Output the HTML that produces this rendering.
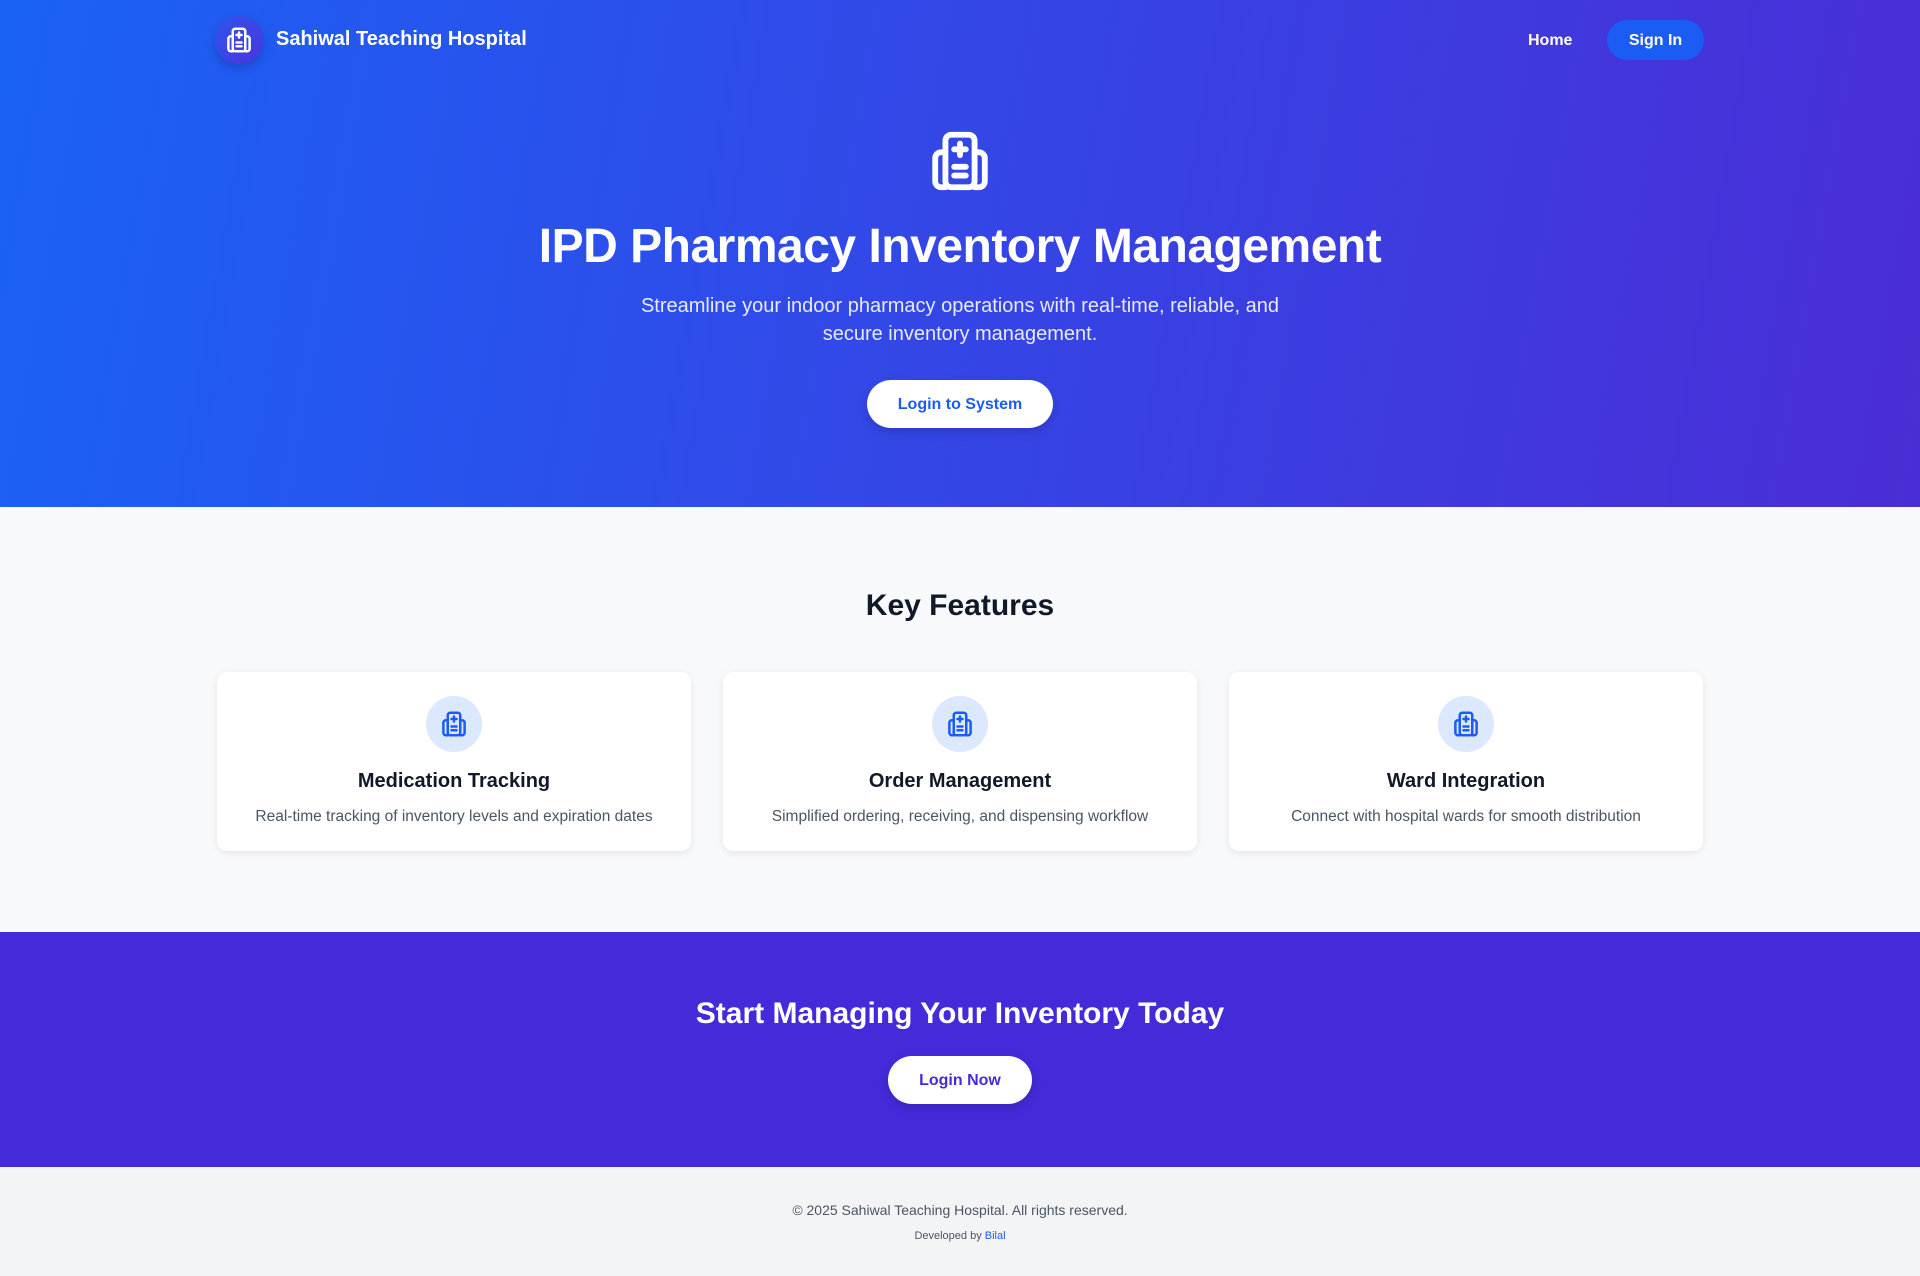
<!DOCTYPE html>
<html><head><meta charset="utf-8"><style>
*{margin:0;padding:0;box-sizing:border-box}
body{width:1920px;height:1276px;font-family:"Liberation Sans",sans-serif;background:#f8f9fb;overflow:hidden;position:relative}
.hero{position:absolute;left:0;top:0;width:1920px;height:507px;background:linear-gradient(100deg,#1a62f6 0%,#3446e6 50%,#4a2dd6 100%);color:#fff}
.logo{position:absolute;left:215px;top:16px;width:48px;height:48px;border-radius:50%;background:linear-gradient(135deg,#2f55ee,#4a35dc);box-shadow:0 4px 10px rgba(0,0,0,.2);display:flex;align-items:center;justify-content:center}
.brand{position:absolute;left:276px;top:28px;font-size:20px;font-weight:bold}
.home{position:absolute;left:1528px;top:32px;font-size:16px;font-weight:bold}
.signin{position:absolute;left:1607px;top:20px;width:97px;height:40px;border-radius:20px;background:#1b5cf5;font-size:16px;font-weight:bold;text-align:center;line-height:41px}
.hicon{position:absolute;left:925px;top:126px}
h1{position:absolute;left:0;width:1920px;top:219px;text-align:center;font-size:48px;font-weight:bold;letter-spacing:-0.5px}
.sub{position:absolute;left:0;width:1920px;top:292px;text-align:center;font-size:20px;line-height:28px;color:#e6ebff}
.btn{position:absolute;background:#fff;border-radius:24px;text-align:center;font-weight:bold;font-size:16px;box-shadow:0 4px 10px rgba(0,0,0,.15)}
h2{position:absolute;left:0;width:1920px;text-align:center;font-weight:bold}
.card{position:absolute;top:672px;width:474px;height:179px;background:#fff;border-radius:10px;box-shadow:0 2px 8px rgba(0,0,0,.08);text-align:center}
.ci{position:absolute;left:209px;top:24px;width:56px;height:56px;border-radius:50%;background:#dbe8fe;display:flex;align-items:center;justify-content:center}
.card h3{position:absolute;top:98px;width:100%;font-size:20px;color:#111827}
.card p{position:absolute;top:136px;width:100%;font-size:15.5px;color:#4b5563}
.cta{position:absolute;left:0;top:932px;width:1920px;height:235px;background:#432bd9;color:#fff}
.foot{position:absolute;left:0;top:1167px;width:1920px;height:109px;background:#f3f4f6;text-align:center;color:#4b5563}
</style></head><body>
<svg width="0" height="0" style="position:absolute"><defs><g id="h" fill="none" stroke-width="2" stroke-linecap="round" stroke-linejoin="round"><rect x="7" y="3" width="10" height="18" rx="2"/><path d="M7 9H5.5A2 2 0 0 0 3.5 11v8a2 2 0 0 0 2 2H7M17 9h1.5a2 2 0 0 1 2 2v8a2 2 0 0 1-2 2H17M12 6v4M10 8h4M10 14h4M10 17h4"/></g></defs></svg>
<div class="hero">
<div class="logo"><svg width="30" height="30" viewBox="0 0 24 24" stroke="#fff"><use href="#h"/></svg></div>
<div class="brand">Sahiwal Teaching Hospital</div>
<div class="home">Home</div>
<div class="signin">Sign In</div>
<svg class="hicon" width="70" height="70" viewBox="0 0 24 24" stroke="#fff"><use href="#h"/></svg>
<h1>IPD Pharmacy Inventory Management</h1>
<div class="sub">Streamline your indoor pharmacy operations with real-time, reliable, and<br>secure inventory management.</div>
<div class="btn" style="left:867px;top:380px;width:186px;height:48px;line-height:49px;color:#1b5cf5">Login to System</div>
</div>
<h2 style="top:589px;font-size:30px;color:#111827">Key Features</h2>
<div class="card" style="left:217px"><div class="ci"><svg width="30" height="30" viewBox="0 0 24 24" stroke="#1b5cf5"><use href="#h"/></svg></div><h3>Medication Tracking</h3><p>Real-time tracking of inventory levels and expiration dates</p></div>
<div class="card" style="left:723px"><div class="ci"><svg width="30" height="30" viewBox="0 0 24 24" stroke="#1b5cf5"><use href="#h"/></svg></div><h3>Order Management</h3><p>Simplified ordering, receiving, and dispensing workflow</p></div>
<div class="card" style="left:1229px"><div class="ci"><svg width="30" height="30" viewBox="0 0 24 24" stroke="#1b5cf5"><use href="#h"/></svg></div><h3>Ward Integration</h3><p>Connect with hospital wards for smooth distribution</p></div>
<div class="cta">
<h2 style="top:65px;font-size:30px;color:#fff">Start Managing Your Inventory Today</h2>
<div class="btn" style="left:888px;top:124px;width:144px;height:48px;line-height:49px;color:#432bd9">Login Now</div>
</div>
<div class="foot">
<div style="position:absolute;top:35px;width:100%;font-size:14px">© 2025 Sahiwal Teaching Hospital. All rights reserved.</div>
<div style="position:absolute;top:63px;width:100%;font-size:11px">Developed by <span style="color:#1b5cf5">Bilal</span></div>
</div>
</body></html>
